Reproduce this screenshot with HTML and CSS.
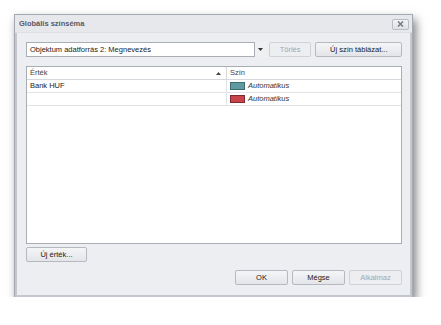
FILE: index.html
```html
<!DOCTYPE html>
<html>
<head>
<meta charset="utf-8">
<link rel="stylesheet" href="styles.css">
</head>
<body>
<div class="dialog">
  <div class="titlebar">
    <span class="title">Globális színséma</span>
    <span class="close"><svg width="7" height="6" viewBox="0 0 7 6"><path d="M1 0.5 L6 5.5 M6 0.5 L1 5.5" stroke="#7a7e85" stroke-width="1.6"/></svg></span>
  </div>
  <div class="body">
    <div class="toprow">
      <div class="combo">
        <div class="combo-text">Objektum adatforrás 2: Megnevezés</div>
        <div class="combo-arrow"><svg width="5" height="3" viewBox="0 0 5 3"><path d="M0 0 H5 L2.5 3 Z" fill="#333"/></svg></div>
      </div>
      <div class="btn disabled w-torles">Törlés</div>
      <div class="btn w-uj">Új szín táblázat...</div>
    </div>
    <div class="grid">
      <div class="grow header">
        <div class="c1">Érték<svg class="sort" width="5" height="3" viewBox="0 0 5 3"><path d="M0 3 H5 L2.5 0 Z" fill="#444"/></svg></div>
        <div class="c2">Szín</div>
      </div>
      <div class="grow">
        <div class="c1">Bank HUF</div>
        <div class="c2"><span class="swatch teal"></span><i>Automatikus</i></div>
      </div>
      <div class="grow">
        <div class="c1"></div>
        <div class="c2"><span class="swatch red"></span><i>Automatikus</i></div>
      </div>
    </div>
    <div class="addrow">
      <div class="btn w-ujertek">Új érték...</div>
    </div>
    <div class="bottomrow">
      <div class="btn w-b">OK</div>
      <div class="btn w-b">Mégse</div>
      <div class="btn w-b disabled">Alkalmaz</div>
    </div>
  </div>
</div>
</body>
</html>
```

FILE: styles.css
```css
html, body {
  margin: 0;
  padding: 0;
  background: #ffffff;
}
body {
  font-family: "Liberation Sans", Arial, sans-serif;
  font-size: 7.5px;
  color: #1a1a1a;
}
.dialog {
  margin: 14px 0 0 14px;
  width: 399px;
  height: 283px;
  box-sizing: border-box;
  border: 1px solid #a4a8b0;
  background: #eceef1;
  box-shadow: 3px 5px 9px rgba(0,0,0,0.5);
  display: flex;
  flex-direction: column;
}
.titlebar {
  height: 17px;
  flex: none;
  background: #e7e8ec;
  border-bottom: 1px solid #dcdee2;
  display: flex;
  align-items: center;
  justify-content: space-between;
  padding: 0 3px 0 4px;
}
.title {
  font-weight: bold;
  color: #555a66;
  font-size: 7.5px;
}
.close {
  width: 15px;
  height: 9px;
  border: 1px solid #b9bcc3;
  border-radius: 2px;
  background: linear-gradient(#f3f4f6, #dfe1e5);
  display: flex;
  align-items: center;
  justify-content: center;
  margin-top: 1px;
}
.body {
  flex: 1;
  border-left: 2px solid #c4c7ce;
  border-right: 2px solid #c4c7ce;
  border-bottom: 2px solid #c4c7ce;
  padding: 9px 8px 10px 9px;
  display: flex;
  flex-direction: column;
}
.toprow {
  display: flex;
  height: 15px;
}
.combo {
  width: 242px;
  display: flex;
  height: 15px;
  box-sizing: border-box;
}
.combo-text {
  flex: 1;
  background: #fff;
  border: 1px solid #a9adb4;
  box-sizing: border-box;
  padding: 0 3px;
  line-height: 13px;
  white-space: nowrap;
}
.combo-arrow {
  width: 12px;
  display: flex;
  align-items: center;
  justify-content: center;
  background: #eef0f2;
}
.btn {
  box-sizing: border-box;
  height: 15px;
  border: 1px solid #b6b9c0;
  border-radius: 2px;
  background: linear-gradient(#f4f5f7, #e3e5e9);
  display: flex;
  align-items: center;
  justify-content: center;
  color: #1a1a1a;
  white-space: nowrap;
}
.btn.disabled {
  color: #a3a7ad;
  border-color: #cfd2d7;
  background: #eceef1;
}
.w-torles { width: 43px; margin-left: 2px; }
.w-uj { width: 87px; margin-left: 4px; }
.grid {
  margin-top: 9px;
  height: 178px;
  box-sizing: border-box;
  border: 1px solid #a9adb4;
  background: #fff;
}
.grow {
  display: flex;
  height: 13px;
  box-sizing: border-box;
  border-bottom: 1px solid #e1e3e7;
  line-height: 12px;
}
.grow.header {
  color: #444;
  border-bottom: 1px solid #d5d8dd;
}
.c1 {
  width: 200px;
  box-sizing: border-box;
  padding-left: 3px;
  border-right: 1px solid #e1e3e7;
  position: relative;
}
.header .c1 { border-right-color: #d5d8dd; }
.sort {
  position: absolute;
  right: 5px;
  top: 5px;
}
.c2 {
  flex: 1;
  padding-left: 3px;
  display: flex;
  align-items: center;
}
.c2 i {
  color: #333;
}
.swatch {
  width: 15px;
  height: 8px;
  box-sizing: border-box;
  margin-right: 3px;
  border: 1px solid #555;
}
.swatch.teal { background: #5e9aa0; border-color: #3e6c70; }
.swatch.red { background: #c9434d; border-color: #7e2a30; }
.addrow {
  margin-top: 3px;
  display: flex;
}
.w-ujertek { width: 61px; }
.bottomrow {
  margin-top: 8px;
  display: flex;
  justify-content: flex-end;
  gap: 4px;
}
.w-b { width: 53px; }
```
